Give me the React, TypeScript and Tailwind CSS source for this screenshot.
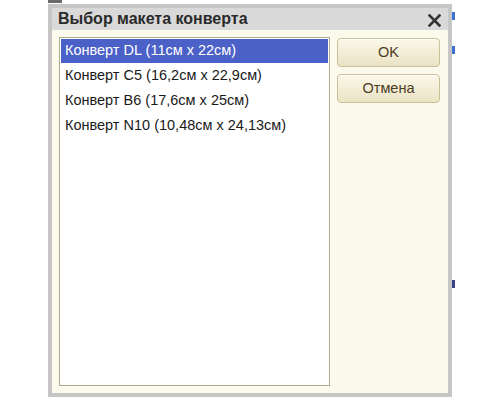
import { useState } from "react";

const ITEMS = [
  "Конверт DL (11см x 22см)",
  "Конверт C5 (16,2см x 22,9см)",
  "Конверт B6 (17,6см x 25см)",
  "Конверт N10 (10,48см x 24,13см)",
];

function DialogButton({ label }: { label: string }) {
  return (
    <button className="h-[29px] w-full rounded-[4px] border border-[#c9bf98] bg-gradient-to-b from-[#fbf8ea] to-[#ebe3c4] text-[14.5px] text-[#4b3c1e] shadow-[inset_0_1px_0_#ffffff]">
      {label}
    </button>
  );
}

export default function App() {
  const [selected, setSelected] = useState(0);

  return (
    <div
      className="relative h-[400px] w-[500px] overflow-hidden bg-white pl-[48px] pt-[4px]"
      style={{ fontFamily: '"Liberation Sans", "DejaVu Sans", sans-serif' }}
    >
      {/* bits of the window behind */}
      <div className="absolute left-[48px] top-0 h-[3px] w-[14px] bg-[#6b6b6b]" />
      <div className="absolute left-[452px] top-[12px] h-[8px] w-[3px] bg-[#3d6fd0]" />
      <div className="absolute left-[452px] top-[46px] h-[8px] w-[3px] bg-[#3d6fd0]" />
      <div className="absolute left-[452px] top-[280px] h-[8px] w-[3px] bg-[#3b3f8a]" />

      <div className="flex h-[393px] w-[404px] flex-col border-[4px] border-[#c6c6c6] bg-[#fcfaec]">
        {/* title bar */}
        <div className="flex h-[22px] items-center justify-between bg-[#d9d9d9] pl-[6px] pr-[7px]">
          <span className="text-[16px] font-bold text-[#2a2a2a]">
            Выбор макета конверта
          </span>
          <svg width="13" height="13" viewBox="0 0 13 13" className="mt-[2px]">
            <path
              d="M1.5 1.5 L11.5 11.5 M11.5 1.5 L1.5 11.5"
              stroke="#333333"
              strokeWidth="2.6"
              strokeLinecap="square"
            />
          </svg>
        </div>

        {/* body */}
        <div className="flex flex-1 gap-[7px] pb-[7px] pl-[7px] pr-[8px] pt-[7px]">
          <div className="flex w-[271px] flex-col border border-[#a9aa8e] bg-white p-[1px]">
            {ITEMS.map((item, i) => (
              <div
                key={item}
                onClick={() => setSelected(i)}
                className={
                  i === selected
                    ? "flex h-[24px] items-center bg-[#4b61c8] pl-[4px] text-[14.5px] text-white"
                    : "flex h-[25px] items-center pl-[4px] text-[14.5px] text-[#1a1a1a]"
                }
              >
                {item}
              </div>
            ))}
          </div>
          <div className="flex w-[103px] flex-col gap-[7px] pt-[1px]">
            <DialogButton label="OK" />
            <DialogButton label="Отмена" />
          </div>
        </div>
      </div>
    </div>
  );
}
